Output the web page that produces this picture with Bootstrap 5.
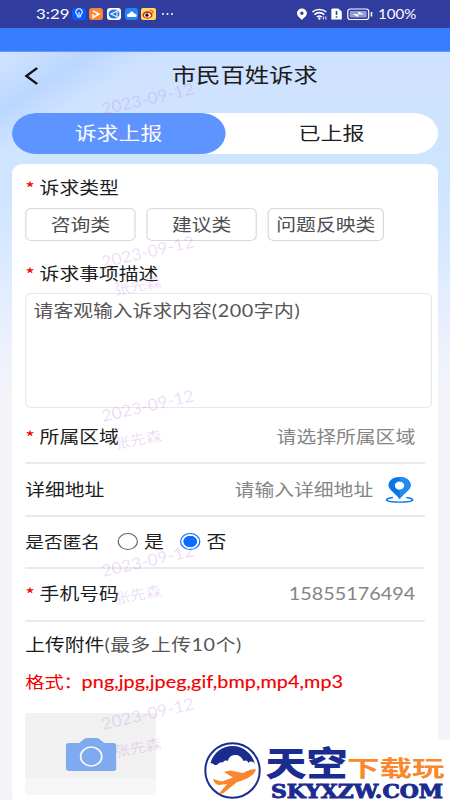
<!DOCTYPE html>
<html lang="zh-CN">
<head>
<meta charset="utf-8">
<meta name="viewport" content="width=device-width, initial-scale=1">
<title>市民百姓诉求</title>
<link href="https://cdn.jsdelivr.net/npm/bootstrap@5.3.0/dist/css/bootstrap.min.css" rel="stylesheet">
<style>
body{width:450px;height:800px;overflow:hidden;font-family:Lato,"Noto Sans CJK SC",sans-serif;font-size:16.5px;line-height:24px;color:#1c1c1c}
/* 375px layout widened to the 450px screen */
.stage{width:375px;height:800px;transform:scaleX(1.2);transform-origin:0 0;overflow:hidden;background:linear-gradient(142deg,transparent 50px,rgba(168,203,255,.5) 88px,rgba(172,206,255,.4) 98px,transparent 122px),linear-gradient(180deg,#cee2ff 52px,#d0e5ff 200px,#d9e9ff 250px,#e8effd 320px,#f2f4fa 390px,#f2f4fa)}
.statusbar{height:28px;background:#303c9e;color:#fff;font-size:13px;padding:0 28px 0 30px}
.clock{font-size:14px;width:30px}
.pct{font-size:12.6px;padding-top:2px}
.strip{height:24px;background:#387dff;border-bottom:1px solid #5f9bff}
.topbar{height:61px;padding:0 20px}
.topbar h1{font-size:20.3px;line-height:30px;width:290px;margin:-16px 0 0 27px}
.topbar svg{margin-top:-14px}
.tabs{height:41px;margin:0 10px;font-size:18.3px}
.tabs .tab-on{width:50%;background:#5d94ff;color:#fff;padding-bottom:2px}
.tabs .tab-off{width:50%;padding-bottom:2px}
.panel{margin:10px 10px 0;height:640px;border-radius:9px;padding:12px 11px 0}
.req{color:#f20000;width:12px;font-family:"Noto Sans CJK SC",sans-serif;font-size:17px}
.types{gap:9px;margin-top:8px;height:33px}
.chip{height:33px;width:92px;border:1px solid #d9d9d9;border-radius:5px;color:#4d4d4d}
.chip-wide{width:97px}
.desc-label{margin-top:21px}
.desc{width:339px;height:115px;border:1px solid #e7e7f0;border-radius:5px;color:#555;padding:5px 6px;margin:7px 0 4px}
.line{width:333px;height:52.4px;border-bottom:2px solid #e9e9eb}
.hint{color:#858585}
.anon{font-size:15.6px;width:77px}
.yes{width:31px;padding-left:1px}
.no-opt{margin-left:5px}
.ring{width:17px;height:17px;border:1px solid #666}
.ring-on{border:1.5px solid #0a6cff;background:radial-gradient(circle,#0a6cff 5.4px,#fff 6px)}
.files{margin-top:11px}
.limit{color:#555;letter-spacing:.45px}
.pin{margin-left:9px}
.fmt{color:#f20000;margin-top:13px}
.ext{-webkit-text-stroke:.15px #f20000;letter-spacing:.05px}
.fmt-name{font-size:16px;margin-right:-1px}
.shot{width:109px;height:82px;margin-top:19px;background:linear-gradient(#f1f1f1 65px,#f6f6f6 65px)}
.cam{margin-top:24px}
.wm{left:104px;width:104px;color:rgba(178,110,222,.23);font-size:16.5px;pointer-events:none}
.wm div{line-height:20px;transform:rotate(-13deg) scaleX(1.06);transform-origin:0 100%;white-space:nowrap}
.wm .who{font-size:14.5px;margin:8px 0 0 12px;transform:rotate(-10deg) scaleX(1.1)}
.wm1{top:99px}.wm2{top:252px}.wm3{top:406px}.wm4{top:561px}.wm5{top:714px}
.brand{left:195px;top:740px;overflow:visible}
</style>
<script src="https://cdn.jsdelivr.net/npm/bootstrap@5.3.0/dist/js/bootstrap.bundle.min.js"></script>
</head>
<body class="position-relative m-0">
<div class="stage">
  <div class="statusbar d-flex align-items-center justify-content-between">
    <div class="d-flex align-items-center">
      <span class="clock">3:29</span>
      <svg width="85" height="14" viewBox="0 0 102 14" preserveAspectRatio="none">
        <rect x="0" y="1" width="14" height="12" rx="3" fill="#075cff"/><path d="M5 7.500a3.200 3.200 0 1 1 4 0L8 10H6zM7 5v4" fill="none" stroke="#fff" stroke-width="1.100"/>
        <rect x="17" y="1" width="14" height="12" rx="3" fill="#fb8535"/><path d="M21 4l6 3-6 3.500V7" fill="none" stroke="#fff" stroke-width="1.600"/>
        <rect x="35" y="1" width="14" height="12" rx="3" fill="#fff"/><ellipse cx="42" cy="7" rx="5.500" ry="4.500" fill="#2878e4"/><path d="M39 7l6-3v6z" fill="none" stroke="#fff"/>
        <rect x="53" y="1" width="13" height="12" rx="3" fill="#2685f3"/><path d="M55 9.500c-.5-3 2-3 2.500-3 .8-3 4-2.500 4.500 0 3-.2 3.500 3 1.500 3.500h-7z" fill="#fff"/>
        <rect x="69" y="1" width="15" height="12" rx="2" fill="#ffdc56"/><ellipse cx="75.500" cy="8" rx="5" ry="3.700" fill="#e02020"/><ellipse cx="75.500" cy="8.200" rx="3.300" ry="2.300" fill="#fff"/><circle cx="75" cy="8.200" r="1.600" fill="#111"/><path d="M78 3.500c2-.5 3.500.8 3 3" fill="none" stroke="#f16a1e" stroke-width="1.300"/>
        <g fill="#fff"><circle cx="91" cy="7" r="1"/><circle cx="95.500" cy="7" r="1"/><circle cx="100" cy="7" r="1"/></g>
      </svg>
    </div>
    <div class="d-flex align-items-center">
      <svg class="me-1" width="64" height="14" viewBox="0 0 77 14" preserveAspectRatio="none">
        <path fill-rule="evenodd" d="M5.500 1.500a5 4.700 0 0 1 5 4.800c0 3-3.500 5-5 6.700C4 11.300.5 9.300.5 6.300a5 4.700 0 0 1 5-4.800zm0 3a1.700 1.700 0 1 0 0 3.400 1.700 1.700 0 0 0 0-3.400z" fill="#fff"/>
        <g fill="none" stroke="#fff" stroke-width="1.500"><path d="M16 5c4-3.500 10-3.500 14 0M18 7.700c3-2.500 7-2.500 10 0M20.500 10c1.500-1.200 3.500-1.200 5 0"/></g><circle cx="23" cy="11.500" r="1.200" fill="#fff"/><path d="M27 9.500v3m2.500-3v3" stroke="#fff"/>
        <path d="M36 1.500h6l3.500 3v8H35v-10z" fill="#fff"/><path d="M40.200 4v4m0 1.200v1.600" stroke="#303c9e" stroke-width="1.600"/>
        <rect x="51.500" y="2" width="21" height="10.500" rx="2.500" fill="none" stroke="#fff" stroke-width="1.200"/><rect x="53.500" y="4" width="17" height="6.500" rx="1" fill="#949bd0"/><path d="M56 7l6 .2 0-2.700 6 3-6-.2v2.700z" fill="#fff"/><path d="M75.300 5v4.500" stroke="#fff" stroke-width="1.500"/>
      </svg>
      <span class="pct">100%</span>
    </div>
  </div>
  <div class="strip"></div>
  <div class="topbar d-flex align-items-center">
    <svg width="12" height="20" viewBox="0 0 12 20"><path d="M11 2L2 10l9 8" fill="none" stroke="#111" stroke-width="2.200"/></svg>
    <h1 class="fw-normal text-center">市民百姓诉求</h1>
  </div>
  <div class="tabs d-flex bg-white rounded-pill">
    <div class="tab-on rounded-pill d-flex align-items-center justify-content-center">诉求上报</div>
    <div class="tab-off d-flex align-items-center justify-content-center">已上报</div>
  </div>
  <main class="panel bg-white">
    <div class="d-flex"><span class="req">*</span><span>诉求类型</span></div>
    <div class="d-flex types">
      <div class="chip d-flex align-items-center justify-content-center">咨询类</div>
      <div class="chip d-flex align-items-center justify-content-center">建议类</div>
      <div class="chip chip-wide d-flex align-items-center justify-content-center">问题反映类</div>
    </div>
    <div class="d-flex desc-label"><span class="req">*</span><span>诉求事项描述</span></div>
    <div class="desc">请客观输入诉求内容<span class="limit">(200字内)</span></div>
    <div class="line d-flex align-items-center"><span class="req">*</span><span>所属区域</span><span class="hint ms-auto me-2">请选择所属区域</span></div>
    <div class="line d-flex align-items-center"><span>详细地址</span><span class="hint ms-auto">请输入详细地址</span>
      <svg class="pin me-2" width="26" height="28" viewBox="-1 0 28 30" preserveAspectRatio="none"><path d="M7 23c-8 1-9 5 6 5s14-4 6-5" fill="none" stroke="#0878e8" stroke-width="1.500"/><path fill-rule="evenodd" d="M13 1c5.500 0 10 3.600 10 9 0 5-6.500 8.500-10 15C9.500 18.500 3 15 3 10 3 4.600 7.500 1 13 1zm0 5a4.300 4.300 0 1 0 0 8.600A4.300 4.300 0 0 0 13 6z" fill="#0878e8"/><path d="M13 14.600A4.300 4.300 0 0 0 13 6V1c5.500 0 10 3.600 10 9 0 5-6.500 8.500-10 15z" fill="#228cf0"/></svg>
    </div>
    <div class="line d-flex align-items-center"><span class="anon">是否匿名</span><span class="ring rounded-circle"></span><span class="ms-1 yes">是</span><span class="ring ring-on rounded-circle"></span><span class="no-opt">否</span></div>
    <div class="line d-flex align-items-center"><span class="req">*</span><span>手机号码</span><span class="hint ms-auto me-2">15855176494</span></div>
    <div class="files">上传附件<span class="limit">(最多上传10个)</span></div>
    <div class="fmt"><span class="fmt-name">格式：</span><span class="ext">png,jpg,jpeg,gif,bmp,mp4,mp3</span></div>
    <div class="shot d-flex justify-content-center">
      <svg class="cam" width="42" height="34" viewBox="0 0 50 34" preserveAspectRatio="none"><path d="M3 6h10l5-4q1-1 3-1h9q2 0 3 1l5 4h9q3 0 3 3v22q0 3-3 3H3q-3 0-3-3V9q0-3 3-3z" fill="#7faaf0"/><ellipse cx="25" cy="19.500" rx="10.500" ry="9.500" fill="none" stroke="#f4f6fb" stroke-width="1.700"/></svg>
    </div>
  </main>
</div>
<div class="wm wm1 position-absolute"><div>2023-09-12</div><div class="who">张先森</div></div>
<div class="wm wm2 position-absolute"><div>2023-09-12</div><div class="who">张先森</div></div>
<div class="wm wm3 position-absolute"><div>2023-09-12</div><div class="who">张先森</div></div>
<div class="wm wm4 position-absolute"><div>2023-09-12</div><div class="who">张先森</div></div>
<div class="wm wm5 position-absolute"><div>2023-09-12</div><div class="who">张先森</div></div>
<svg class="brand position-absolute" width="255" height="60" viewBox="0 0 255 60">
  <rect width="255" height="60" fill="#fff"/>
  <circle cx="37.500" cy="30.500" r="27.200" fill="#fff" stroke="#1b2c91" stroke-width="2"/>
  <path d="M15.500 23C18 13 27 6 37.500 6S57 13 60 24c-2-3-5-3-6.500-1-1-3-3.500-3-5-2-2-5-6-6.500-9-6-4 .5-6 3-6.500 6-2-1-4-.5-5 1.500-4-1-5 3-7 2.500-2 .5-3-2-5.500-2z" fill="#1b2c91"/>
  <path d="M61 29.500c-3-1-8 .5-13 3.500L35 30.500 29 32l9 5.500-11 4-9-2.500c1 3 3 6 6 6l8-1-8 9.500h4l14-11.500c8-2 17-6 19-12.500z" fill="#fa872d"/>
  <text transform="translate(70.500 36.200) scale(1.210 1)" font-family="'Noto Sans CJK SC',sans-serif" font-weight="900" font-size="34" fill="#1b2c91">天空</text>
  <text transform="translate(152 35.500) scale(1.480 1)" font-family="'Noto Sans CJK SC',sans-serif" font-weight="700" font-size="22" fill="#fa872d">下载玩</text>
  <text x="76" y="57.500" font-family="'DejaVu Serif',serif" font-weight="bold" font-size="18" textLength="172" lengthAdjust="spacingAndGlyphs" stroke="#1b2c91" stroke-width=".9" fill="#1b2c91">SKYXZW.COM</text>
</svg>
</body>
</html>
